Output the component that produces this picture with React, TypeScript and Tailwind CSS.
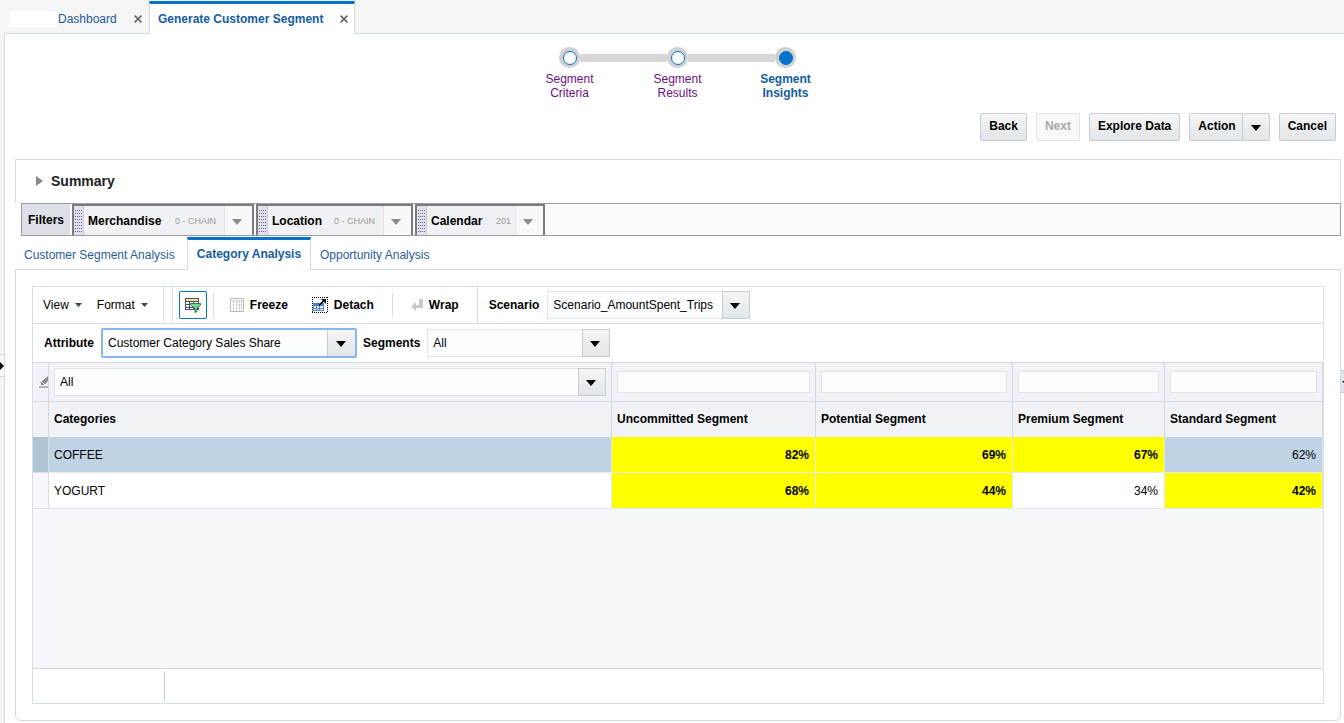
import type { ReactNode } from "react";
import clsx from "clsx";

const Caret = ({ className }: { className?: string }) => (
  <svg viewBox="0 0 10 6" className={clsx("h-1.5 w-2.5 shrink-0", className)} fill="currentColor" aria-hidden="true">
    <path d="M0 0h10L5 6z" />
  </svg>
);

const SmallCaret = () => (
  <svg viewBox="0 0 7 4" className="h-1 w-[7px] shrink-0" fill="#444" aria-hidden="true">
    <path d="M0 0h7L3.5 4z" />
  </svg>
);

const CloseIcon = () => (
  <svg viewBox="0 0 8 8" className="size-2" stroke="#666" strokeWidth="1.6" aria-hidden="true">
    <path d="M.6.6l6.800 6.800M7.400.6L.6 7.400" />
  </svg>
);

const FilterIcon = () => (
  <svg viewBox="0 0 16 16" className="size-4" aria-hidden="true">
    <path fill="#4a4c72" d="M0 1h14v12H0z" />
    <path fill="#f3e488" d="M1 2h12v2H1z" />
    <path fill="#fff" d="M1 5h3v2H1zM5 5h3v2H5zM9 5h4v2H9zM1 8h3v2H1zM5 8h3v2H5zM1 11h3v1H1zM5 11h3v1H5z" />
    <path fill="#7fcf9b" stroke="#2f7d55" d="M5.500 6.500h10v1.500L12 11.500v3l-2 1v-4L5.500 8z" />
  </svg>
);

const FreezeIcon = () => (
  <svg viewBox="0 0 14 14" className="size-3.5" fill="none" stroke="#bdbdbd" aria-hidden="true">
    <path d="M.5.5h13v13H.5z" />
    <path d="M1 2.500h12" stroke="#ddd" />
    <path d="M3.500 3v10M6.500 3v10M9.500 3v10M11.500 3v10" strokeDasharray="2 1" />
  </svg>
);

const DetachIcon = () => (
  <svg viewBox="0 0 16 16" className="size-4" fill="none" aria-hidden="true">
    <path d="M0 .5h16M0 15.500h16M.5 0v16M15.500 0v16" stroke="#000" strokeDasharray="1 1" />
    <path d="M1 6h11v8H1z" fill="#4d86d8" />
    <path d="M2 9h2v2H2zM5 9h2v2H5zM8 9h3v2H8zM2 12h2v1H2zM5 12h2v1H5zM8 12h3v1H8z" fill="#fff" />
    <path d="M7 8.500L12.500 3" stroke="#000" strokeWidth="1.600" />
    <path d="M9 2h5v5z" fill="#000" />
  </svg>
);

const WrapIcon = () => (
  <svg viewBox="0 0 12 12" className="size-3" fill="#c9c9c9" aria-hidden="true">
    <path d="M8 0h4v9H5v3L0 7.500 5 3v3h3z" />
  </svg>
);

const EraserIcon = () => (
  <svg viewBox="0 0 9 12" className="ml-auto h-3 w-[9px]" aria-hidden="true">
    <path d="M9 0v5L5.500 9 2 9 1.500 6.500z" fill="#8b8b8b" />
    <path d="M3 6l3 3" stroke="#f1f3f7" />
    <path d="M0 11h9" stroke="#777" />
  </svg>
);

const buttonStyle =
  "flex h-7 items-center rounded-xs border border-[#c4ced7] bg-linear-to-b from-[#f4f5f6] to-[#e2e6e9] pb-0.5 font-bold";

type DropdownProps = {
  id: string;
  value: string;
  label: string;
  className: string;
  focused?: boolean;
};

const Dropdown = ({ id, value, label, className, focused }: DropdownProps) => (
  <div
    className={clsx(
      "relative flex",
      focused ? "h-[30px] rounded-xs border-2 border-[#8ab4f8]" : "h-7 border border-[#dfe4e7]",
      className
    )}
  >
    <select id={id} aria-label={label} className="w-full appearance-none bg-[#fcfdfe] pr-7 pl-[5px] outline-none">
      <option>{value}</option>
    </select>
    <span
      className={clsx(
        "pointer-events-none absolute flex w-7 items-center justify-center border-[#c4ced7] bg-linear-to-b from-[#f4f5f6] to-[#e2e6e9] pt-0.5 pr-0.5",
        focused ? "inset-y-0 right-0 border-l" : "-inset-y-px -right-px border"
      )}
    >
      <Caret />
    </span>
  </div>
);

const steps = [
  { first: "Segment", second: "Criteria", active: false },
  { first: "Segment", second: "Results", active: false },
  { first: "Segment", second: "Insights", active: true },
];

const Train = () => (
  <ol className="flex justify-center pr-1">
    {steps.map((step, index) => (
      <li key={step.second} className="w-[108px]">
        <a
          href="#"
          className={clsx("block text-center leading-3.5", step.active ? "font-bold text-[#145c9e]" : "text-[#6a1080]")}
        >
          <span className="mb-1 flex items-center">
            <span className={clsx("h-2 flex-1", index > 0 && "bg-[#d8d8d8]")} />
            <span className="flex size-[21px] items-center justify-center rounded-full bg-[#d0d0d0]">
              <span
                className={clsx("size-3.5 rounded-full border border-[#0572ce]", step.active ? "bg-[#0572ce]" : "bg-white")}
              />
            </span>
            <span className={clsx("h-2 flex-1", index < steps.length - 1 && "bg-[#d8d8d8]")} />
          </span>
          {step.first}
          <br />
          {step.second}
        </a>
      </li>
    ))}
  </ol>
);

const filters = [
  { name: "Merchandise", value: "0 - CHAIN", width: "w-[182px]", select: "w-[77px]" },
  { name: "Location", value: "0 - CHAIN", width: "w-[157px]", select: "w-[77px]" },
  { name: "Calendar", value: "201", width: "w-[130px]", select: "w-[47px]" },
];

const FilterBar = () => (
  <div className="ml-1.5 flex h-[33px] gap-0.5 border border-[#999ca1] bg-[#f9fafc]">
    <div className="flex w-12 items-center justify-center bg-[#dcdfe6] font-bold">Filters</div>
    {filters.map((filter) => (
      <div
        key={filter.name}
        className={clsx("flex items-center border-x-2 border-t-2 border-[#7b7c80] bg-[#f0f1f4]", filter.width)}
      >
        <svg className="mr-1 h-full w-2.5 shrink-0 border-r border-[#c8cad0] bg-[#dfe0ea]" aria-hidden="true">
          <defs>
            <pattern id="grip" width="2" height="3" patternUnits="userSpaceOnUse">
              <rect width="1" height="1" x="1" y="1" fill="#66688c" />
            </pattern>
          </defs>
          <rect width="8" height="24" y="2" fill="url(#grip)" />
        </svg>
        <label htmlFor={filter.name} className="font-bold">
          {filter.name}
        </label>
        <div className="relative ml-auto flex h-full">
          <select
            id={filter.name}
            className={clsx("h-full appearance-none text-[9px] text-[#999] outline-none", filter.select)}
          >
            <option>{filter.value}</option>
          </select>
          <span className="pointer-events-none absolute inset-y-0 right-0 flex w-7 items-center justify-center border-l border-[#e2e4e8] bg-[#f7f8fa] pt-0.5 pr-1 text-[#8b8b8b]">
            <Caret />
          </span>
        </div>
      </div>
    ))}
  </div>
);

const SubTabs = () => (
  <div role="tablist" className="flex h-[33px] pt-px text-[#2a5d94]">
    <button role="tab" className="w-[172px] pt-1 pl-[9px] text-left">
      Customer Segment Analysis
    </button>
    <button
      role="tab"
      aria-selected="true"
      className="z-10 -mb-px w-[124px] border-x border-t-3 border-x-[#d0dbe4] border-t-[#0572ce] bg-white pb-0.5 font-bold text-[#145c9e]"
    >
      Category Analysis
    </button>
    <button role="tab" className="px-[9px] pt-1">
      Opportunity Analysis
    </button>
  </div>
);

const ToolButton = ({ icon, children }: { icon: ReactNode; children: ReactNode }) => (
  <button className="flex items-center gap-1.5 font-bold">
    {icon}
    {children}
  </button>
);

const Toolbar = () => (
  <>
    <div className="flex h-[37px] items-center border-b border-[#d6dfe6]">
      <button className="ml-2.5 flex items-center gap-1.5">
        View <SmallCaret />
      </button>
      <button className="ml-[15px] flex items-center gap-1.5">
        Format <SmallCaret />
      </button>
      <span className="ml-[15px] h-full w-2.5 border-x border-[#d6dfe6]" />
      <button
        aria-label="Query by example"
        className="ml-1.5 flex size-7 items-center justify-center rounded-xs border border-[#0572ce]"
      >
        <FilterIcon />
      </button>
      <span className="mr-4 ml-1.5 h-6 w-px bg-[#d6dfe6]" />
      <ToolButton icon={<FreezeIcon />}>Freeze</ToolButton>
      <span className="w-6" />
      <ToolButton icon={<DetachIcon />}>Detach</ToolButton>
      <span className="mr-[18px] ml-[18px] h-6 w-px bg-[#d6dfe6]" />
      <ToolButton icon={<WrapIcon />}>Wrap</ToolButton>
      <span className="mr-[11px] ml-[18px] h-full w-px bg-[#d6dfe6]" />
      <label htmlFor="scenario" className="mr-2 font-bold">
        Scenario
      </label>
      <Dropdown id="scenario" label="Scenario" value="Scenario_AmountSpent_Trips" className="w-[203px]" />
    </div>
    <div className="flex h-[38px] items-center">
      <label htmlFor="attribute" className="mr-[7px] ml-[11px] font-bold">
        Attribute
      </label>
      <Dropdown id="attribute" label="Attribute" value="Customer Category Sales Share" className="w-[256px]" focused />
      <label htmlFor="segments" className="mr-[7px] ml-1.5 font-bold">
        Segments
      </label>
      <Dropdown id="segments" label="Segments" value="All" className="w-[183px]" />
    </div>
  </>
);

const segments = ["Uncommitted Segment", "Potential Segment", "Premium Segment", "Standard Segment"];

const rows = [
  {
    category: "COFFEE",
    selected: true,
    values: [
      { share: 82, high: true },
      { share: 69, high: true },
      { share: 67, high: true },
      { share: 62, high: false },
    ],
  },
  {
    category: "YOGURT",
    selected: false,
    values: [
      { share: 68, high: true },
      { share: 44, high: true },
      { share: 34, high: false },
      { share: 42, high: true },
    ],
  },
];

const SegmentTable = () => (
  <table className="w-full table-fixed border-separate border-spacing-0">
    <colgroup>
      <col className="w-4" />
      <col />
      <col className="w-[204px]" />
      <col className="w-[197px]" />
      <col className="w-[152px]" />
      <col className="w-[158px]" />
    </colgroup>
    <thead className="bg-[#f1f3f7]">
      <tr className="h-10">
        <td className="border-y border-r border-[#d0dae2]">
          <EraserIcon />
        </td>
        <td className="border-y border-r border-[#d0dae2] px-[5px]">
          <Dropdown id="category" label="Category filter" value="All" className="w-full" />
        </td>
        {segments.map((segment) => (
          <td key={segment} className="border-y border-r border-[#d0dae2] px-[5px]">
            <input
              type="text"
              aria-label={`Filter ${segment}`}
              className="block h-[22px] w-full border border-[#dfe4e7] bg-[#fcfdfe] px-1"
            />
          </td>
        ))}
      </tr>
      <tr className="h-[35px] text-left">
        <td className="border-r border-[#d0dae2]" />
        <th className="border-r border-[#d0dae2] px-[5px] pb-0.5">Categories</th>
        {segments.map((segment) => (
          <th key={segment} className="border-r border-[#d0dae2] px-[5px] pb-0.5">
            {segment}
          </th>
        ))}
      </tr>
    </thead>
    <tbody>
      {rows.map((row) => (
        <tr key={row.category} className={clsx("h-9", row.selected ? "bg-[#bfd3e5]" : "bg-white")}>
          <td className={clsx("border-r border-b border-[#d6dfe6]", row.selected ? "bg-[#b1c4d5]" : "bg-[#f7f8fc]")} />
          <td className="border-r border-b border-[#e3e8ee] px-[5px]">{row.category}</td>
          {row.values.map((value, index) => (
            <td
              key={segments[index]}
              className={clsx("border-r border-b border-[#e3e8ee] px-1.5 text-right", value.high && "bg-[#ff0] font-bold")}
            >
              {value.share}%
            </td>
          ))}
        </tr>
      ))}
    </tbody>
  </table>
);

const App = () => {
  return (
    <div className="flex min-h-screen flex-col bg-[#f5f5f5] font-['Liberation_Sans',Arial,sans-serif] text-xs text-black">
      <nav className="z-10 flex h-[33px] pt-px pl-[10px] text-[#1f5a96]">
        <div className="flex w-[139px] items-center pt-1">
          <span className="mr-px h-4 w-[47px] bg-white" />
          <a href="#">Dashboard</a>
          <button aria-label="Close Dashboard" className="mr-[7px] ml-auto">
            <CloseIcon />
          </button>
        </div>
        <div className="-mb-px flex w-[206px] items-center border-x border-t-3 border-x-[#cfdbe5] border-t-[#0572ce] bg-white pl-2">
          <a href="#" className="font-bold text-[#145c9e]">
            Generate Customer Segment
          </a>
          <button aria-label="Close Generate Customer Segment" className="mr-1.5 ml-auto">
            <CloseIcon />
          </button>
        </div>
      </nav>
      <div className="flex flex-1">
        <aside className="flex w-1 flex-col">
          <button
            aria-label="Expand panel"
            className="mt-[321px] flex h-[23px] items-center border-y border-[#d0d5da] bg-[#f8f8f8]"
          >
            <svg viewBox="0 0 4 8" className="h-2 w-1" aria-hidden="true">
              <path d="M0 0l4 4-4 4z" />
            </svg>
          </button>
        </aside>
        <main className="flex min-w-0 flex-1 flex-col border-t border-l border-[#d0dbe5] bg-white pt-[13px] pb-0.5 pl-2.5">
          <Train />
          <div className="mt-[13px] mr-2 flex justify-end gap-[9px]">
            <button className={clsx(buttonStyle, "px-2")}>Back</button>
            <button
              disabled
              className="flex h-7 items-center rounded-xs border border-[#e3e6e9] bg-[#f8f8f8] px-2 pb-0.5 font-bold text-[#a8a8a8]"
            >
              Next
            </button>
            <button className={clsx(buttonStyle, "px-2")}>Explore Data</button>
            <div className="flex">
              <button className={clsx(buttonStyle, "pr-1.5 pl-2")}>Action</button>
              <button aria-label="More actions" className={clsx(buttonStyle, "-ml-px px-2 pt-1")}>
                <Caret />
              </button>
            </div>
            <button className={clsx(buttonStyle, "px-2")}>Cancel</button>
          </div>
          <div className="flex flex-1">
            <div className="mt-[18px] flex min-w-0 flex-1 flex-col">
              <section className="flex h-11 items-center border border-b-0 border-[#d6dfe6] pb-0.5 pl-5">
                <button className="flex items-center gap-2 text-sm font-bold text-[#222]">
                  <svg viewBox="0 0 7 10" className="h-2.5 w-[7px]" fill="#888" aria-hidden="true">
                    <path d="M0 0l7 5-7 5z" />
                  </svg>
                  Summary
                </button>
              </section>
              <FilterBar />
              <SubTabs />
              <section className="flex flex-1 flex-col rounded-b-md border border-[#d0dbe4] p-4">
                <div className="flex flex-1 flex-col border border-[#d6dfe6]">
                  <Toolbar />
                  <SegmentTable />
                  <div className="flex-1 bg-[#f7f8fc]" />
                  <footer className="flex h-[35px] border-t border-[#d6d9dd] py-0.5">
                    <span className="w-[132px] border-r border-[#c8cbd0]" />
                  </footer>
                </div>
              </section>
            </div>
            <aside className="flex w-[3px] flex-col">
              <button
                aria-label="Expand right panel"
                className="mt-[229px] flex h-[23px] items-center justify-end border-y border-[#c4ced7] bg-[#dfe5ea]"
              >
                <svg viewBox="0 0 2 2" className="size-0.5" aria-hidden="true">
                  <path d="M0 0h2v2z" />
                </svg>
              </button>
            </aside>
          </div>
        </main>
      </div>
    </div>
  );
};

export default App;
